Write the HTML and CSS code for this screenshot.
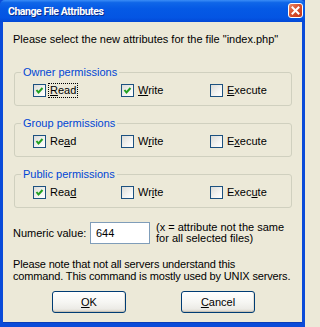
FILE: index.html
```html
<!DOCTYPE html>
<html>
<head>
<meta charset="utf-8">
<link rel="stylesheet" href="styles.css">
</head>
<body>
<div class="window">
  <div class="titlebar">
    <span class="title">Change File Attributes</span>
    <span class="close"><svg width="9" height="9" viewBox="0 0 9 9"><path d="M1.5 1.5 L7.5 7.5 M7.5 1.5 L1.5 7.5" stroke="#fff" stroke-width="2" stroke-linecap="square"/></svg></span>
  </div>
  <div class="client">
    <p class="intro">Please select the new attributes for the file "index.php"</p>

    <fieldset class="group">
      <legend>Owner permissions</legend>
      <div class="row">
        <label class="opt"><span class="cb checked"><svg width="11" height="11" viewBox="0 0 11 11"><path d="M2.5 5 L4.5 7.5 L8.5 3" fill="none" stroke="#21A121" stroke-width="2"/></svg></span><span class="txt focus"><u>R</u>ead</span></label>
        <label class="opt"><span class="cb checked"><svg width="11" height="11" viewBox="0 0 11 11"><path d="M2.5 5 L4.5 7.5 L8.5 3" fill="none" stroke="#21A121" stroke-width="2"/></svg></span><span class="txt"><u>W</u>rite</span></label>
        <label class="opt"><span class="cb"></span><span class="txt"><u>E</u>xecute</span></label>
      </div>
    </fieldset>

    <fieldset class="group">
      <legend>Group permissions</legend>
      <div class="row">
        <label class="opt"><span class="cb checked"><svg width="11" height="11" viewBox="0 0 11 11"><path d="M2.5 5 L4.5 7.5 L8.5 3" fill="none" stroke="#21A121" stroke-width="2"/></svg></span><span class="txt">Re<u>a</u>d</span></label>
        <label class="opt"><span class="cb"></span><span class="txt">W<u>r</u>ite</span></label>
        <label class="opt"><span class="cb"></span><span class="txt">E<u>x</u>ecute</span></label>
      </div>
    </fieldset>

    <fieldset class="group">
      <legend>Public permissions</legend>
      <div class="row">
        <label class="opt"><span class="cb checked"><svg width="11" height="11" viewBox="0 0 11 11"><path d="M2.5 5 L4.5 7.5 L8.5 3" fill="none" stroke="#21A121" stroke-width="2"/></svg></span><span class="txt">Rea<u>d</u></span></label>
        <label class="opt"><span class="cb"></span><span class="txt">Wr<u>i</u>te</span></label>
        <label class="opt"><span class="cb"></span><span class="txt">Exec<u>u</u>te</span></label>
      </div>
    </fieldset>

    <div class="numeric">
      <span class="num-label">Numeric value:</span>
      <span class="num-input">644</span>
      <span class="num-note">(x = attribute not the same<br>for all selected files)</span>
    </div>

    <p class="note">Please note that not all servers understand this<br>command. This command is mostly used by UNIX servers.</p>

    <div class="buttons">
      <span class="btn"><u>O</u>K</span>
      <span class="btn"><u>C</u>ancel</span>
    </div>
  </div>
</div>
</body>
</html>
```

FILE: styles.css
```css
html, body {
  margin: 0;
  padding: 0;
  background: #ECE9D8;
}

.window {
  width: 305px;
  height: 327px;
  box-sizing: border-box;
  background: #0A4BD9;
  display: flex;
  flex-direction: column;
  font-family: "Liberation Sans", Arial, sans-serif;
  font-size: 11px;
  color: #000;
  overflow: hidden;
}

.titlebar {
  height: 22px;
  flex: 0 0 22px;
  display: flex;
  align-items: center;
  justify-content: space-between;
  padding: 0 5px 0 8px;
  background: linear-gradient(#3B8DF6 0%, #0F66E8 12%, #0559E5 40%, #0455E3 80%, #0348D6 100%);
  border-radius: 5px 5px 0 0;
}

.title {
  color: #fff;
  font-family: Roboto, "Liberation Sans", sans-serif;
  font-weight: bold;
  font-size: 10.5px;
  letter-spacing: -0.45px;
  text-shadow: 1px 1px 0 #0A2C8C;
  margin-top: 1px;
}

.close {
  width: 15px;
  height: 15px;
  box-sizing: border-box;
  border: 1px solid #fff;
  border-radius: 3px;
  background: linear-gradient(135deg, #E98A6B 0%, #D8512E 45%, #C3371A 100%);
  display: flex;
  align-items: center;
  justify-content: center;
  margin-top: -2px;
  margin-right: -3px;
}

.close svg { display: block; }

.client {
  flex: 1;
  margin: 0 3px 4px 3px;
  background: #ECE9D8;
  padding: 11px 10px 0 10px;
  box-shadow: inset 0 -1px 0 #0A3DB8;
}

.intro {
  margin: 0;
  line-height: 13px;
  white-space: nowrap;
}

.group {
  margin: 20px 0 0 1px;
  border: 1px solid #D0D0BF;
  border-radius: 3px;
  padding: 6px 0 8px 18px;
}

.group + .group {
  margin-top: 11px;
}

.group legend {
  color: #0046D5;
  padding: 0 2px;
  margin-left: -12px;
  line-height: 12px;
}

.row {
  display: grid;
  grid-template-columns: 88px 89px auto;
  height: 13px;
}

.opt {
  display: flex;
  align-items: center;
  height: 13px;
}

.cb {
  width: 13px;
  height: 13px;
  box-sizing: border-box;
  border: 1px solid #1C5180;
  background: linear-gradient(135deg, #DCDCD7 0%, #F4F4F2 60%, #FFFFFF 100%);
  flex: 0 0 13px;
  display: flex;
  align-items: center;
  justify-content: center;
}

.cb svg { display: block; }

.txt {
  margin-left: 2px;
  line-height: 13px;
  padding: 0 1px;
  border: 1px dotted transparent;
}

.txt.focus {
  border-color: #000;
}

.txt u, .btn u {
  text-decoration: underline;
  text-underline-offset: 1px;
}

.numeric {
  display: flex;
  align-items: center;
  margin-top: 14px;
  height: 22px;
}

.num-label {
  width: 77px;
  flex: 0 0 77px;
}

.num-input {
  width: 60px;
  height: 22px;
  box-sizing: border-box;
  border: 1px solid #7F9DB9;
  background: #fff;
  padding: 3px 0 0 5px;
  line-height: 14px;
}

.num-note {
  margin-left: 6px;
  line-height: 11px;
  white-space: nowrap;
}

.note {
  margin: 14px 0 0 0;
  line-height: 12px;
  white-space: nowrap;
  letter-spacing: -0.15px;
}

.buttons {
  display: flex;
  margin: 9px 0 0 39px;
  gap: 55px;
}

.btn {
  width: 74px;
  height: 22px;
  box-sizing: border-box;
  border: 1px solid #003C74;
  border-radius: 3px;
  background: linear-gradient(#FFFFFF 0%, #F6F6F3 50%, #ECEBE6 85%, #D6D0C5 100%);
  box-shadow: inset 0 -1px 0 #C7C2B6, inset -1px 0 0 #E3E0D6;
  display: flex;
  align-items: center;
  justify-content: center;
  line-height: 13px;
}
```
